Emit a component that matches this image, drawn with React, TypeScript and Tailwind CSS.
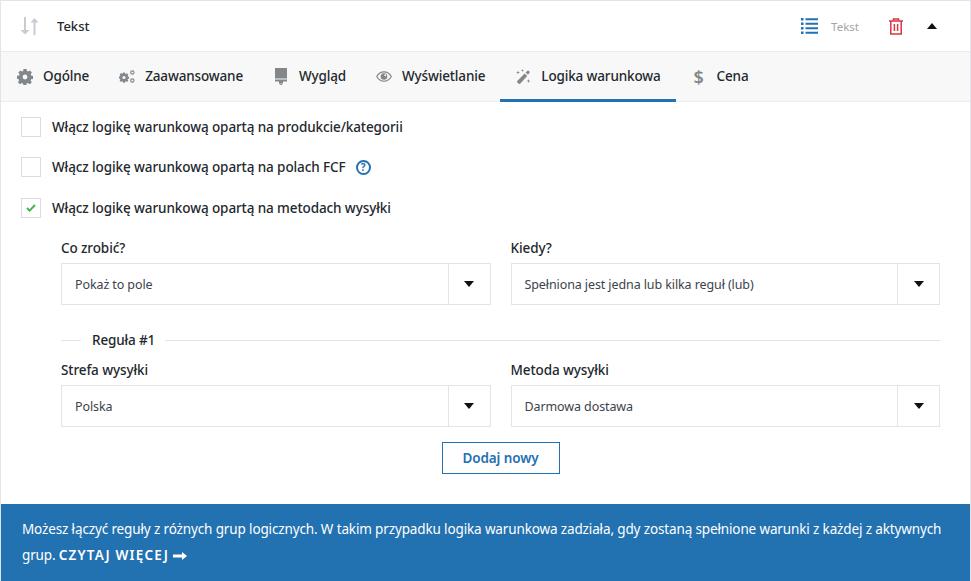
import React from 'react';

const Gear = ({ className = '' }: { className?: string }) => (
  <svg viewBox="0 0 16 16" className={className} fill="currentColor">
    <path fillRule="evenodd" d="M6.5 0h3l.4 2.1 1.2.5L12.9 1.4l2 2.1-1.2 1.8.5 1.2 1.8.4v3l-1.9.4-.5 1.2 1.2 1.8-2 2-1.9-1.2-1.2.5-.3 1.9h-3l-.4-1.9-1.2-.5-1.8 1.2-2.1-2 1.2-1.8-.5-1.2L0 9.8v-3l2.1-.4.5-1.2L1.3 3.4l2.1-2 1.7 1.2 1.1-.5zM8 5.6a2.4 2.4 0 1 0 0 4.8 2.4 2.4 0 0 0 0-4.8z" />
  </svg>
);

const Gears = ({ className = '' }: { className?: string }) => (
  <svg viewBox="0 0 18 14" className={className} fill="currentColor">
    <path fillRule="evenodd" d="M4.5 2.5h2.2l.3 1.4.8.3 1.2-.8 1.5 1.5-.8 1.2.3.8 1.4.3v2.2l-1.4.3-.3.8.8 1.2-1.5 1.5-1.2-.8-.8.3-.3 1.3H4.5l-.3-1.3-.8-.3-1.2.8L.7 11.5l.8-1.2-.3-.8L0 9.2V7l1.2-.3.3-.8-.8-1.2 1.5-1.5 1.2.8.8-.3zM5.6 6.3a1.8 1.8 0 1 0 0 3.6 1.8 1.8 0 0 0 0-3.6z" />
    <path fillRule="evenodd" d="M15 0a2.5 2.5 0 1 1 0 5 2.5 2.5 0 0 1 0-5zm0 1.3a1.2 1.2 0 1 0 0 2.4 1.2 1.2 0 0 0 0-2.4zM15 9a2.5 2.5 0 1 1 0 5 2.5 2.5 0 0 1 0-5zm0 1.3a1.2 1.2 0 1 0 0 2.4 1.2 1.2 0 0 0 0-2.4z" />
  </svg>
);

const Roller = ({ className = '' }: { className?: string }) => (
  <svg viewBox="0 0 12 17" className={className} fill="currentColor">
    <path d="M0 0h12v10.5H0zM0 11.5h12v2H8V15H4v-1.5H0z" />
    <path fillRule="evenodd" d="M6 13.5a1.75 1.75 0 1 1 0 3.5 1.75 1.75 0 0 1 0-3.5zm0 1.2a.55.55 0 1 0 0 1.1.55.55 0 0 0 0-1.1z" />
  </svg>
);

const Eye = ({ className = '' }: { className?: string }) => (
  <svg viewBox="0 0 16 11" className={className} fill="none" stroke="currentColor">
    <path d="M.7 5.5C2.5 2.4 5 .8 8 .8s5.5 1.6 7.3 4.7C13.5 8.6 11 10.2 8 10.2S2.5 8.6.7 5.5z" strokeWidth="1.2" />
    <circle cx="8" cy="5.5" r="3.3" fill="currentColor" stroke="none" />
    <circle cx="9.3" cy="4.2" r="1" fill="#f8f8f8" stroke="none" />
  </svg>
);

const Wand = ({ className = '' }: { className?: string }) => (
  <svg viewBox="0 0 16 16" className={className} fill="currentColor">
    <path d="M9.6 4.4l2.6 2.6-6.8 7.6c-.6.6-1.4.6-2 0l-.9-.9c-.6-.6-.6-1.4 0-2z" />
    <path d="M10.6 3.4l1.7-1.5c.5-.4 1.1-.4 1.5 0l.6.6c.4.4.4 1 0 1.5l-1.5 1.7z" />
    <path d="M3 1.5l.5 1.5L5 3.5 3.5 4 3 5.5 2.5 4 1 3.5 2.5 3zM7.5 0l.4 1.1 1.1.4-1.1.4-.4 1.1-.4-1.1L6 1.5l1.1-.4zM13.5 10l.5 1.5 1.5.5-1.5.5-.5 1.5-.5-1.5-1.5-.5 1.5-.5z" />
  </svg>
);

const SortArrows = () => (
  <svg viewBox="0 0 18 18" className="w-[18px] h-[18px] text-[#c8ccd1]" fill="currentColor">
    <path d="M3 0h2v13h3.5L4 17.5-.5 13H3z" />
    <path d="M12.5 5h2v13h-2zM13.5 1l4 4.5h-8z" />
  </svg>
);

const Trash = () => (
  <svg viewBox="0 0 14 17" className="w-[14px] h-[17px] text-[#dc3545]" fill="none" stroke="currentColor" strokeWidth="1.5">
    <path d="M0 3h14M4.5 3V1h5v2M1.8 3v13h10.4V3M5.4 6v7M8.6 6v7" />
  </svg>
);

const ListIcon = () => (
  <svg viewBox="0 0 17 16" className="w-[17px] h-4 text-[#2271b1]" fill="currentColor">
    <path d="M0 0h2.5v2.5H0zM4.5 .3H17v2H4.5zM0 4.5h2.5V7H0zM4.5 4.8H17v2H4.5zM0 9h2.5v2.5H0zM4.5 9.3H17v2H4.5zM0 13.5h2.5V16H0zM4.5 13.8H17v2H4.5z" />
  </svg>
);

const tabs = [
  { label: 'Ogólne', icon: <Gear className="w-4 h-4" /> },
  { label: 'Zaawansowane', icon: <Gears className="w-4 h-[13px]" /> },
  { label: 'Wygląd', icon: <Roller className="w-3 h-[17px]" /> },
  { label: 'Wyświetlanie', icon: <Eye className="w-4 h-[11px]" /> },
  { label: 'Logika warunkowa', icon: <Wand className="w-4 h-4" />, active: true },
  { label: 'Cena', icon: <span className="text-[18px] font-semibold leading-none">$</span> },
];

const Check = ({ label, checked, help }: { label: string; checked?: boolean; help?: boolean }) => (
  <div className="flex items-center h-5 gap-[11px]">
    <span className="w-5 h-5 bg-white border border-[#dcdcde] flex items-center justify-center">
      {checked && (
        <svg viewBox="0 0 10 8" className="w-[10px] h-2 text-[#46b450]" fill="none" stroke="currentColor" strokeWidth="2">
          <path d="M1 4l2.6 2.6L9 1" />
        </svg>
      )}
    </span>
    <span className="text-[13.5px] tracking-[-0.1px] font-medium text-[#23282d]">{label}</span>
    {help && (
      <span className="-ml-[1px] w-[15px] h-[15px] rounded-full border-2 border-[#2271b1] text-[#2271b1] text-[10px] font-bold flex items-center justify-center">?</span>
    )}
  </div>
);

const Select = ({ label, value }: { label: string; value: string }) => (
  <div className="flex-1 min-w-0">
    <div className="text-[13.5px] tracking-[-0.1px] font-medium text-[#23282d] leading-5 mb-[5px]">{label}</div>
    <div className="flex h-[42px] border border-[#e2e4e7] bg-white">
      <div className="flex-1 flex items-center pl-[13px] pt-[2px] text-[12.5px] tracking-[-0.1px] text-[#3c434a]">{value}</div>
      <div className="w-[42px] border-l border-[#e2e4e7] flex items-center justify-center">
        <span className="w-0 h-0 border-x-[5.5px] border-x-transparent border-t-[6px] border-t-[#111]" />
      </div>
    </div>
  </div>
);

export default function App() {
  return (
    <div className="w-[971px] h-[581px] bg-white border-x border-t border-[#e2e4e7] flex flex-col font-['Noto_Sans',sans-serif] text-[#23282d]">
      <div className="h-[50px] flex items-center pl-5 pr-[33px] shrink-0">
        <SortArrows />
        <span className="ml-[18px] pt-[2px] text-[13px] font-medium">Tekst</span>
        <div className="ml-auto flex items-center">
          <ListIcon />
          <span className="ml-[13px] pt-[1px] text-[11.5px] text-[#a0a5aa]">Tekst</span>
          <span className="ml-[30px] flex"><Trash /></span>
          <span className="ml-[24px] w-0 h-0 border-x-[5.5px] border-x-transparent border-b-[6px] border-b-[#111]" />
        </div>
      </div>

      <div className="h-[51px] shrink-0 bg-[#f8f8f8] border-y border-[#ececec] flex pl-4">
        {tabs.map((tab) => (
          <div
            key={tab.label}
            className={`flex items-center gap-[10px] h-[50px] pt-[2px] text-[13.5px] tracking-[-0.15px] font-medium pr-[15px] pl-[15px] first:pl-0 border-b-[3px] ${
              tab.active ? 'border-[#2271b1]' : 'border-transparent'
            }`}
          >
            <span className="w-4 text-[#82878c] flex items-center justify-center">{tab.icon}</span>
            <span className="text-[#23282d]">{tab.label}</span>
          </div>
        ))}
      </div>

      <div className="flex-1 pl-5 pr-[30px] pt-[15px]">
        <div className="flex flex-col">
          <Check label="Włącz logikę warunkową opartą na produkcie/kategorii" />
          <div className="mt-5">
            <Check label="Włącz logikę warunkową opartą na polach FCF" help />
          </div>
          <div className="mt-[21px]">
            <Check label="Włącz logikę warunkową opartą na metodach wysyłki" checked />
          </div>
        </div>
        <div className="pl-10 mt-[20px]">
          <div className="flex gap-5">
            <Select label="Co zrobić?" value="Pokaż to pole" />
            <Select label="Kiedy?" value="Spełniona jest jedna lub kilka reguł (lub)" />
          </div>
          <div className="flex items-center mt-[25px] h-5">
            <span className="w-5 h-px bg-[#e2e4e7]" />
            <span className="ml-[11px] mr-[10px] text-[13.5px] tracking-[-0.15px] font-medium">Reguła #1</span>
            <span className="flex-1 h-px bg-[#e2e4e7]" />
          </div>
          <div className="flex gap-5 mt-[10px]">
            <Select label="Strefa wysyłki" value="Polska" />
            <Select label="Metoda wysyłki" value="Darmowa dostawa" />
          </div>
          <div className="flex justify-center mt-[15px]">
            <button className="w-[118px] h-8 border border-[#2271b1] text-[#2271b1] text-[13.5px] tracking-[-0.1px] font-semibold">Dodaj nowy</button>
          </div>
        </div>
      </div>

      <div className="h-[77px] shrink-0 bg-[#2271b1] text-white text-[13.5px] tracking-[-0.135px] leading-[26px] px-[21px] pt-[12px] whitespace-nowrap">
        Możesz łączyć reguły z różnych grup logicznych. W takim przypadku logika warunkowa zadziała, gdy zostaną spełnione warunki z każdej z aktywnych
        <br />
        grup. <span className="font-semibold tracking-[1.15px]">CZYTAJ WIĘCEJ</span>
        <svg viewBox="0 0 14 10" className="inline ml-[4px] w-[14px] h-[10px] align-[-1px]" fill="currentColor">
          <path d="M0 3.5h9V1l5 4-5 4V6.5H0z" />
        </svg>
      </div>
    </div>
  );
}
